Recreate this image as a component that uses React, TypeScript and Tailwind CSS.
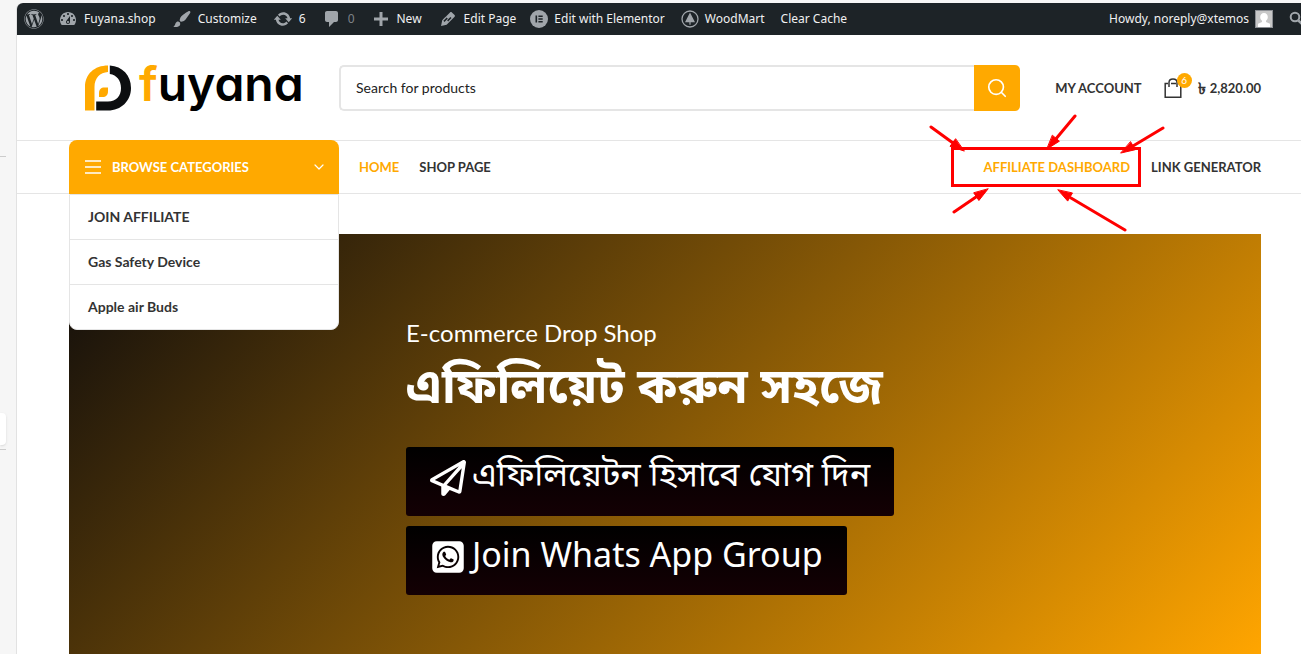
import { FaRegPaperPlane, FaSquareWhatsapp, FaWordpress } from "react-icons/fa6";
import { FiChevronDown, FiSearch } from "react-icons/fi";

const icons = {
  dashboard:
    "M3.76 16h12.48c1.1-1.37 1.76-3.11 1.76-5 0-4.42-3.58-8-8-8s-8 3.58-8 8c0 1.89.66 3.63 1.76 5zM10 4c.55 0 1 .45 1 1s-.45 1-1 1-1-.45-1-1 .45-1 1-1zM6 6c.55 0 1 .45 1 1s-.45 1-1 1-1-.45-1-1 .45-1 1-1zm8 0c.55 0 1 .45 1 1s-.45 1-1 1-1-.45-1-1 .45-1 1-1zm-5.37 5.55L12 7v6c0 1.1-.9 2-2 2s-2-.9-2-2c0-.57.24-1.08.63-1.45zM4 10c.55 0 1 .45 1 1s-.45 1-1 1-1-.45-1-1 .45-1 1-1zm12 0c.55 0 1 .45 1 1s-.45 1-1 1-1-.45-1-1 .45-1 1-1zm-5 3c0-.55-.45-1-1-1s-1 .45-1 1 .45 1 1 1 1-.45 1-1z",
  brush:
    "M18.33 3.57s.27-.8-.31-1.36c-.53-.52-1.22-.24-1.22-.24-.61.3-5.76 3.47-7.67 5.57-.86.96-2.06 3.79-1.09 4.82.92.98 3.96-.17 4.79-1 2.06-2.06 5.21-7.17 5.5-7.79zM1.4 17.65c2.37-1.56 1.46-3.41 3.23-4.64.93-.65 2.22-.62 3.08.29.63.67.8 2.57-.16 3.46-1.57 1.45-4 1.55-6.15.89z",
  update:
    "M10.2 3.28c3.53 0 6.43 2.61 6.92 6h2.08l-3.5 4-3.5-4h2.32c-.45-1.97-2.21-3.45-4.32-3.45-1.45 0-2.73.71-3.54 1.78L4.95 5.66C6.23 4.2 8.11 3.28 10.2 3.28zm-.4 13.44c-3.52 0-6.43-2.61-6.92-6H.8l3.5-4c1.17 1.33 2.33 2.67 3.5 4H5.48c.45 1.97 2.21 3.45 4.32 3.45 1.45 0 2.73-.71 3.54-1.78l1.71 1.95c-1.28 1.46-3.15 2.38-5.25 2.38z",
  comment:
    "M5 2h9c1.1 0 2 .9 2 2v7c0 1.1-.9 2-2 2h-2l-5 5v-5H5c-1.1 0-2-.9-2-2V4c0-1.1.9-2 2-2z",
  plus: "M17 8.500v3h-5.500v5.500h-3v-5.500H3v-3h5.500V3h3v5.500z",
  edit: "M13.89 3.39l2.71 2.72c.46.46.42 1.24.03 1.64l-8.01 8.02-5.56 1.16 1.16-5.58s7.6-7.63 7.99-8.03c.39-.39 1.22-.39 1.68.07zm-5.200 5.100l-3.300 3.300 1.110 1.110 3.300-3.300zm1.500 3.900l3.300-3.300-1.070-1.080-3.300 3.300z",
};

function BarIcon({ path }: { path: string }) {
  return (
    <svg viewBox="0 0 20 20" className="size-5 shrink-0 fill-[#a0a5aa]">
      <path d={path} />
    </svg>
  );
}

const barLinks = [
  { label: "Fuyana.shop", path: icons.dashboard },
  { label: "Customize", path: icons.brush },
  { label: "6", path: icons.update },
  { label: "0", path: icons.comment },
  { label: "New", path: icons.plus },
  { label: "Edit Page", path: icons.edit },
];

const categories = ["JOIN AFFILIATE", "Gas Safety Device", "Apple air Buds"];

function AdminBar() {
  return (
    <div className="flex h-8 items-center justify-between overflow-hidden rounded-tl-md bg-[#1d2327] pl-[7px] font-['Noto_Sans'] text-xs whitespace-nowrap text-[#f0f0f1]">
      <div className="flex items-center gap-[14px]">
        <a href="#" aria-label="WordPress">
          <FaWordpress className="size-5 text-[#a0a5aa]" />
        </a>
        <div className="flex items-center gap-4">
          {barLinks.map((item) => (
            <a key={item.label} href="#" className="flex items-center gap-[6px]">
              <BarIcon path={item.path} />
              <span className={item.label === "0" ? "text-[#7d8287]" : ""}>{item.label}</span>
            </a>
          ))}
        </div>
        <a href="#" className="flex items-center gap-[6px]">
          <svg viewBox="0 0 18 18" className="size-[18px]">
            <circle cx="9" cy="9" r="9" fill="#a0a5aa" />
            <path d="M5.500 5.500h1.600v7H5.500zM8.400 5.500h4.300V7H8.400zM8.400 8.300h4.300v1.400H8.400zM8.400 11h4.300v1.500H8.400z" fill="#1d2327" />
          </svg>
          Edit with Elementor
        </a>
        <a href="#" className="ml-[2px] flex items-center gap-[6px]">
          <svg viewBox="0 0 18 18" className="size-[18px]">
            <circle cx="9" cy="9" r="8" fill="none" stroke="#a0a5aa" strokeWidth="1.300" />
            <path d="M9 2.600l5 9.600H9.600v2.600H8.400v-2.600H4z" fill="#a0a5aa" />
          </svg>
          WoodMart
        </a>
        <a href="#" className="ml-[2px]">
          Clear Cache
        </a>
      </div>
      <div className="-mr-1 flex items-center">
        <a href="#" className="flex items-center gap-[6px]">
          Howdy, noreply@xtemos
          <svg viewBox="0 0 18 18" className="size-[18px]">
            <path d="M0 0h18v18H0z" fill="#8c8f94" />
            <path d="M1 1h16v16H1z" fill="#c8c8c8" />
            <path d="M9 3c2.400 0 3.800 1.700 3.800 4 0 1.700-.8 3-1.800 3.700v1.300l4 1.800V17H3v-3.200L7 12v-1.300C6 10 5.200 8.700 5.200 7c0-2.300 1.400-4 3.800-4z" fill="#fff" />
          </svg>
        </a>
        <button aria-label="Search admin" className="ml-4">
          <svg viewBox="0 0 16 16" className="size-4" fill="none" stroke="#a0a5aa">
            <circle cx="6" cy="6" r="4.300" strokeWidth="2" />
            <path d="M9.300 9.300l5 5" strokeWidth="2.600" />
          </svg>
        </button>
      </div>
    </div>
  );
}

function Logo() {
  return (
    <a href="#" className="flex items-center gap-2">
      <svg viewBox="0 0 46 46" className="size-[46px]">
        <path d="M0 45.500V22C0 9 9.500.500 23 .500V7C15 7.500 9.500 13 9.500 22V45.500z" fill="#ffa900" />
        <path d="M24.800.500C37.500 1.500 46 10 46 23S36 45.500 23 45.500H11.200V36.500H23c8.300 0 13-5.500 13-13.500 0-7.500-4.200-13-11.200-14z" fill="#0c0e10" />
        <path d="M14 32v-4c0-3.500 2-5.500 5.500-5.500H23V26c0 4-2 6-5.500 6z" fill="#ffa900" />
      </svg>
      <span className="pb-2 font-['Inter'] text-[48px] leading-[48px] font-semibold text-black [font-feature-settings:'cv11']">
        <span className="text-[#ffa900]">f</span>uyana
      </span>
    </a>
  );
}

function Header() {
  return (
    <header className="flex h-[105px] items-center pr-10 pl-[68px]">
      <div className="w-[254px] shrink-0">
        <Logo />
      </div>
      <form className="flex h-[46px] flex-1" onSubmit={(e) => e.preventDefault()}>
        <input
          type="text"
          aria-label="Search for products"
          placeholder="Search for products"
          className="min-w-0 flex-1 rounded-l-[5px] border-2 border-r-0 border-[#e5e5e5] px-[15px] text-sm placeholder:text-[#222]"
        />
        <button aria-label="Search" className="flex w-[46px] items-center justify-center rounded-r-[5px] bg-[#ffa900] text-white">
          <FiSearch className="size-[22px]" strokeWidth={1.800} />
        </button>
      </form>
      <a href="#" className="ml-[35px] text-[13px] leading-5 font-bold text-[#333]">
        MY ACCOUNT
      </a>
      <a href="#" className="ml-[22px] flex items-center text-[13px] leading-5 font-bold text-[#333]">
        <span className="relative mr-4">
          <svg viewBox="0 0 18 20" className="h-5 w-[18px]" fill="none" stroke="#333" strokeWidth="1.500">
            <path d="M4 5.500H1.200v13.700h15.600V5.500H14M7 5.500h5" />
            <path d="M5 9V4.500C5 2.500 6.500 1 9 1s4 1.500 4 3.500V9" />
          </svg>
          <span className="absolute -top-[5px] left-[13px] flex size-[15px] items-center justify-center rounded-full bg-[#ffa900] text-[10px] font-normal text-white">
            6
          </span>
        </span>
        <span className="mr-1 text-base leading-5">৳</span>
        2,820.00
      </a>
    </header>
  );
}

// Red box with the five arrows that point at the dashboard link
function Callout() {
  return (
    <svg viewBox="0 0 246 124" className="pointer-events-none absolute -top-[45px] -right-[41px] h-[124px] w-[246px]" fill="none" stroke="#f00" strokeWidth="3" strokeLinecap="round">
      <rect x="27.500" y="36.500" width="187" height="37" />
      <path d="M6 15l22 16M150 4l-20 24M238 16l-30 18M29 100l22-15M200 118l-54-32" />
      <path
        d="M39 39l-14-4.700 5.400-7.300zM122 37l12.400-7.800-6.800-5.800zM196 41l14.300-3.300-4.600-7.800zM63 77l-9.100 11.500-5-7.400zM133 78l9.700 11.100 4.600-7.800z"
        fill="#f00"
        strokeWidth="1"
      />
    </svg>
  );
}

function NavBar() {
  return (
    <nav className="relative z-10 flex h-[54px] items-stretch border-y border-[#e5e5e5] pr-10 pl-[52px] text-[13px] leading-5 font-bold text-[#333]">
      <div className="relative -my-px w-[270px] shrink-0">
        <button className="flex h-[54px] w-full items-center rounded-t-lg bg-[#ffa900] px-4 text-white">
          <svg viewBox="0 0 16 14" className="h-[14px] w-4" stroke="#fff" strokeWidth="1.500">
            <path d="M0 1h16M0 7h16M0 13h16" />
          </svg>
          <span className="ml-[11px] flex-1 text-left">BROWSE CATEGORIES</span>
          <FiChevronDown className="-mr-1 size-4" strokeWidth={1.800} />
        </button>
        <ul className="absolute inset-x-0 top-full rounded-b-lg border border-[#e5e5e5] bg-white text-sm">
          {categories.map((name) => (
            <li key={name} className="border-t border-[#e5e5e5] first:border-t-0">
              <a href="#" className="flex h-11 items-center px-[18px]">
                {name}
              </a>
            </li>
          ))}
        </ul>
      </div>
      <div className="flex flex-1 items-center gap-5 pl-5">
        <a href="#" className="text-[#ffa900]">
          HOME
        </a>
        <a href="#">SHOP PAGE</a>
      </div>
      <div className="flex items-center gap-[21px]">
        <a href="#" className="relative text-[#ffa900]">
          AFFILIATE DASHBOARD
          <Callout />
        </a>
        <a href="#">LINK GENERATOR</a>
      </div>
    </nav>
  );
}

function Banner() {
  return (
    <section className="mt-10 mr-10 ml-[52px] flex flex-1 flex-col items-start bg-[linear-gradient(135deg,#0d0b0c,#ffa500)] pt-20 pb-[59px] pl-[337px] text-white">
      <p className="text-2xl leading-[38px]">E-commerce Drop Shop</p>
      <h1 className="mb-5 pt-[3px] font-['Noto_Sans_Bengali','Noto_Sans',sans-serif] text-[49px] leading-[72px] font-bold whitespace-nowrap">
        এফিলিয়েট করুন সহজে
      </h1>
      <a href="#" className="flex h-[69px] items-center gap-[6px] rounded-[3px] bg-[linear-gradient(#000,#140004)] px-6 pb-2 font-['Noto_Sans_Bengali','Noto_Sans',sans-serif] text-[34px] leading-[54px] whitespace-nowrap">
        <FaRegPaperPlane className="size-9" />
        <span>এফিলিয়েটন হিসাবে যোগ দিন</span>
      </a>
      <a href="#" className="mt-[10px] flex h-[69px] items-center gap-[6px] rounded-[3px] bg-[linear-gradient(#000,#140004)] px-6 pb-2 font-['Noto_Sans_Bengali','Noto_Sans',sans-serif] text-[34px] leading-[54px] whitespace-nowrap">
        <FaSquareWhatsapp className="size-9" />
        <span className="pt-1">Join Whats App Group</span>
      </a>
    </section>
  );
}

function App() {
  return (
    <div className="relative flex min-h-screen flex-col overflow-hidden bg-[#f6f6f6] pt-[3px] pl-4 font-['Lato',sans-serif]">
      <div className="absolute top-[156px] left-0 h-px w-[6px] bg-[#ccc]" />
      <div className="absolute top-[413px] left-0 h-8 w-[6px] rounded-r bg-white shadow" />
      <div className="absolute top-[449px] left-0 h-px w-[6px] bg-[#ccc]" />
      <div className="flex flex-1 flex-col rounded-tl-md border-l border-[#e2e2e2] bg-white">
        <AdminBar />
        <Header />
        <NavBar />
        <Banner />
      </div>
    </div>
  );
}

export default App;
